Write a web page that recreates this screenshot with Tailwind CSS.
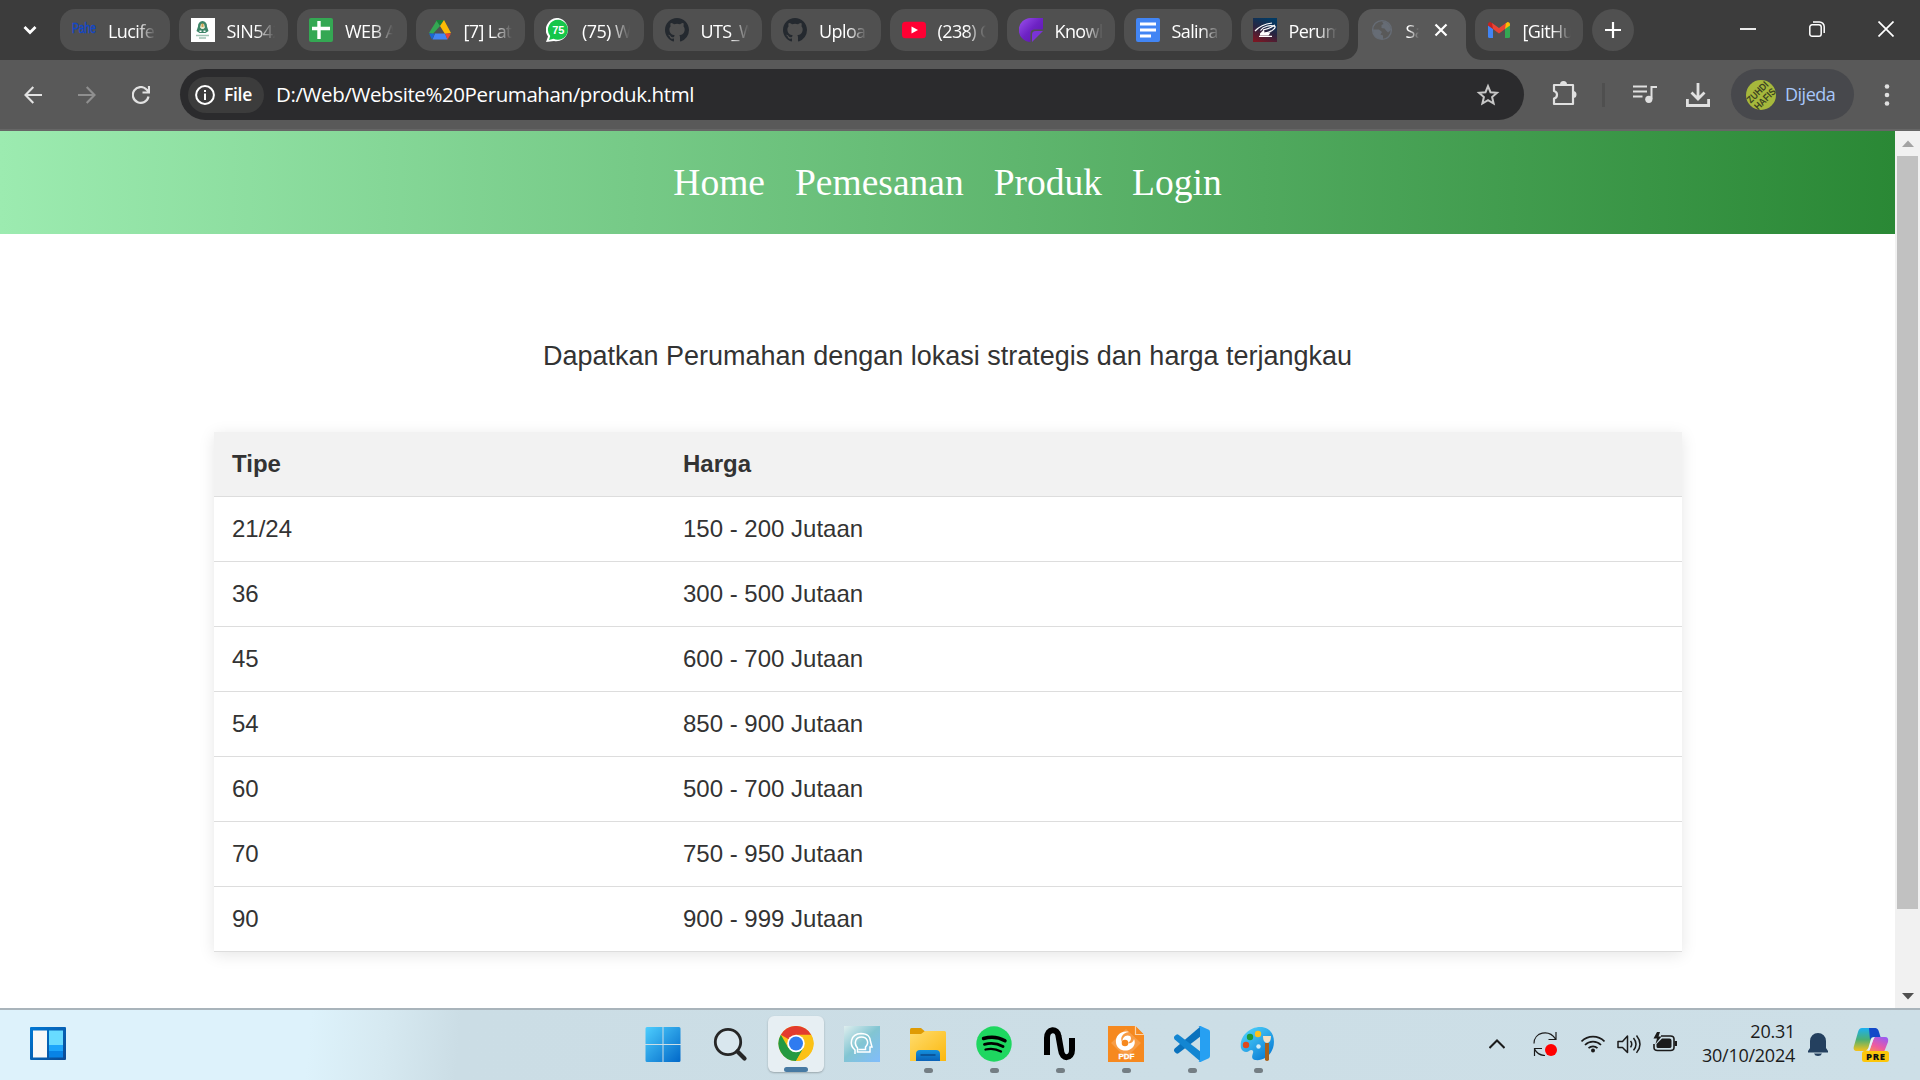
<!DOCTYPE html>
<html lang="id">
<head>
<meta charset="utf-8">
<title>Perumahan</title>
<script src="https://cdn.jsdelivr.net/npm/@tailwindcss/browser@4"></script>
</head>
<body class="w-[1920px] h-[1080px] overflow-hidden flex flex-col bg-white font-['Open_Sans',sans-serif]">

<!-- Tab strip -->
<div class="h-[60px] shrink-0 bg-[#3c3c3c] flex pt-[9px] pl-5 text-white text-[18px]">
  <div class="w-5 h-[42px] flex items-center justify-center mr-5">
    <svg class="size-5" viewBox="0 0 20 20" fill="none" stroke="#fff" stroke-width="2.8"><path d="M4.5 7l5.500 5.500L15.500 7"/></svg>
  </div>
  <div class="flex gap-[9px]">
    <div class="w-[109.5px] h-[42px] rounded-[15px] bg-[#505050] flex items-center pl-3 pr-3 gap-3">
      <svg class="size-6 shrink-0" viewBox="0 0 24 24"><text x="0" y="15" font-family="Liberation Sans" font-size="14" textLength="24" lengthAdjust="spacingAndGlyphs" fill="#1247c8" stroke="#1247c8" stroke-width=".4">Pahe</text></svg>
      <span class="w-12 overflow-hidden whitespace-nowrap tracking-[-0.6px] mask-r-from-60% mask-r-to-100% pt-0.5">Lucifer</span>
    </div>
    <div class="w-[109.5px] h-[42px] rounded-[15px] bg-[#505050] flex items-center pl-3 pr-3 gap-3">
      <svg class="size-6 shrink-0" viewBox="0 0 24 24"><path fill="#fff" d="M0 0h24v24H0z"/><path fill="#3d8568" d="M11.500 3a5 5 0 0 1 4.500 5.500l1.500 4.500-3 2h-6l-3-2L7 8.500A5 5 0 0 1 11.500 3z"/><path fill="#e5e9cf" d="M9 9.500l1-3.500h3l1 3.500-1.500 1.500h-2z"/><path fill="#d2a050" d="M10.500 5.500h2V9h-2z"/><path fill="#fff" d="M8.500 12.500h2v1.500h-2zM12.500 12.500h2v1.500h-2z"/><path stroke="#9fc4b4" stroke-width="1.600" d="M5 17.500h13M8 20h7"/></svg>
      <span class="w-12 overflow-hidden whitespace-nowrap tracking-[-0.6px] mask-r-from-60% mask-r-to-100% pt-0.5">SIN542</span>
    </div>
    <div class="w-[109.5px] h-[42px] rounded-[15px] bg-[#505050] flex items-center pl-3 pr-3 gap-3">
      <svg class="size-6 shrink-0" viewBox="0 0 24 24"><rect width="24" height="24" rx="2" fill="#34a853"/><path d="M3 10.500h18M10 3v18" stroke="#fff" stroke-width="3.400"/></svg>
      <span class="w-12 overflow-hidden whitespace-nowrap tracking-[-0.6px] mask-r-from-60% mask-r-to-100% pt-0.5">WEB A</span>
    </div>
    <div class="w-[109.5px] h-[42px] rounded-[15px] bg-[#505050] flex items-center pl-3 pr-3 gap-3">
      <svg class="size-6 shrink-0" viewBox="0 0 24 24"><path fill="#34a853" d="M9 2l3.500 5.500L4.800 16 1 15z"/><path fill="#188038" d="M8 2h8l-4 6z"/><path fill="#fbbc04" d="M16 2l7 13-6 1-5-8z"/><path fill="#4285f4" d="M7 15.500h10l2.500 6H4.500z"/><path fill="#1967d2" d="M1 15.500h6l-3 6z"/><path fill="#ea4335" d="M17 15.500h6l-3.500 6z"/></svg>
      <span class="w-12 overflow-hidden whitespace-nowrap tracking-[-0.6px] mask-r-from-60% mask-r-to-100% pt-0.5">[7] Lati</span>
    </div>
    <div class="w-[109.5px] h-[42px] rounded-[15px] bg-[#505050] flex items-center pl-3 pr-3 gap-3">
      <svg class="size-6 shrink-0" viewBox="0 0 24 24"><path fill="#fff" d="M12.500 0A11.700 11.700 0 1 1 8 23L0 24l2-5.500A11.800 11.800 0 0 1 12.500 0z"/><path fill="#16c64a" d="M12.300 1.800a10 10 0 1 1-4.800 19L3 22l1.200-4A10 10 0 0 1 12.300 1.800z"/><text x="12.300" y="16" text-anchor="middle" font-size="11" font-weight="700" font-family="Liberation Sans" fill="#fff">75</text></svg>
      <span class="w-12 overflow-hidden whitespace-nowrap tracking-[-0.6px] mask-r-from-60% mask-r-to-100% pt-0.5">(75) W</span>
    </div>
    <div class="w-[109.5px] h-[42px] rounded-[15px] bg-[#505050] flex items-center pl-3 pr-3 gap-3">
      <svg class="size-6 shrink-0" viewBox="0 0 16 16" fill="#24292f"><path d="M8 0C3.580 0 0 3.580 0 8c0 3.540 2.290 6.530 5.470 7.590.4.070.55-.17.55-.38 0-.19-.01-.82-.01-1.490-2.010.37-2.530-.49-2.690-.94-.09-.23-.48-.94-.82-1.130-.28-.15-.68-.52-.01-.53.63-.01 1.080.58 1.230.82.72 1.210 1.870.87 2.330.66.07-.52.28-.87.51-1.070-1.780-.2-3.640-.89-3.640-3.950 0-.87.31-1.590.82-2.150-.08-.2-.36-1.020.08-2.120 0 0 .67-.21 2.200.82a7.600 7.600 0 0 1 4 0c1.530-1.040 2.200-.82 2.200-.82.44 1.100.16 1.920.08 2.120.51.56.82 1.270.82 2.150 0 3.070-1.870 3.750-3.650 3.950.29.25.54.73.54 1.480 0 1.070-.01 1.930-.01 2.200 0 .21.15.46.55.38A8 8 0 0 0 16 8c0-4.420-3.580-8-8-8z"/></svg>
      <span class="w-12 overflow-hidden whitespace-nowrap tracking-[-0.6px] mask-r-from-60% mask-r-to-100% pt-0.5">UTS_W</span>
    </div>
    <div class="w-[109.5px] h-[42px] rounded-[15px] bg-[#505050] flex items-center pl-3 pr-3 gap-3">
      <svg class="size-6 shrink-0" viewBox="0 0 16 16" fill="#24292f"><path d="M8 0C3.580 0 0 3.580 0 8c0 3.540 2.290 6.530 5.470 7.590.4.070.55-.17.55-.38 0-.19-.01-.82-.01-1.490-2.010.37-2.530-.49-2.690-.94-.09-.23-.48-.94-.82-1.130-.28-.15-.68-.52-.01-.53.63-.01 1.080.58 1.230.82.72 1.210 1.870.87 2.330.66.07-.52.28-.87.51-1.070-1.780-.2-3.640-.89-3.640-3.950 0-.87.31-1.590.82-2.150-.08-.2-.36-1.020.08-2.120 0 0 .67-.21 2.200.82a7.600 7.600 0 0 1 4 0c1.530-1.040 2.200-.82 2.200-.82.44 1.100.16 1.920.08 2.120.51.56.82 1.270.82 2.150 0 3.070-1.870 3.750-3.650 3.950.29.25.54.73.54 1.480 0 1.070-.01 1.930-.01 2.200 0 .21.15.46.55.38A8 8 0 0 0 16 8c0-4.420-3.580-8-8-8z"/></svg>
      <span class="w-12 overflow-hidden whitespace-nowrap tracking-[-0.6px] mask-r-from-60% mask-r-to-100% pt-0.5">Upload</span>
    </div>
    <div class="w-[108px] h-[42px] rounded-[15px] bg-[#505050] flex items-center pl-3 pr-3 gap-3">
      <svg class="size-6 shrink-0" viewBox="0 0 24 24"><rect y="3.800" width="24" height="16.500" rx="3.500" fill="#ff0033"/><path fill="#fff" d="M9.500 8.500l6.500 3.500-6.500 3.500z"/></svg>
      <span class="w-12 overflow-hidden whitespace-nowrap tracking-[-0.6px] mask-r-from-60% mask-r-to-100% pt-0.5">(238) C</span>
    </div>
    <div class="w-[108px] h-[42px] rounded-[15px] bg-[#505050] flex items-center pl-3 pr-3 gap-3">
      <svg class="size-6 shrink-0" viewBox="0 0 24 24"><defs><linearGradient id="kn" x2="1" y2="1"><stop stop-color="#9b51ee"/><stop offset=".5" stop-color="#6d22c4"/><stop offset="1" stop-color="#5a17a8"/></linearGradient></defs><path fill="url(#kn)" d="M24 0v11.500H15.500q-4 0-4 4V24A12 12 0 0 1 12 0z"/><path fill="#7a33d6" d="M24 13L13 24v-7.500q0-3.500 3.500-3.500z"/></svg>
      <span class="w-12 overflow-hidden whitespace-nowrap tracking-[-0.6px] mask-r-from-60% mask-r-to-100% pt-0.5">Knowle</span>
    </div>
    <div class="w-[108px] h-[42px] rounded-[15px] bg-[#505050] flex items-center pl-3 pr-3 gap-3">
      <svg class="size-6 shrink-0" viewBox="0 0 24 24"><rect width="24" height="24" rx="2" fill="#4285f4"/><path d="M4 6h16M4 12h16M4 18h11" stroke="#fff" stroke-width="3"/></svg>
      <span class="w-12 overflow-hidden whitespace-nowrap tracking-[-0.6px] mask-r-from-60% mask-r-to-100% pt-0.5">Salinan</span>
    </div>
    <div class="w-[108px] h-[42px] rounded-[15px] bg-[#505050] flex items-center pl-3 pr-3 gap-3">
      <svg class="size-6 shrink-0" viewBox="0 0 24 24"><defs><linearGradient id="pr" x1=".2" y1="1" x2=".6" y2="0"><stop stop-color="#7c1622"/><stop offset=".5" stop-color="#2a2440"/><stop offset="1" stop-color="#033a63"/></linearGradient></defs><path fill="url(#pr)" d="M0 0h24v24H0z"/><g fill="none" stroke="#fff" stroke-width="1.200"><path d="M2 13C6 8.500 11 6 19 5M7.500 12.500C10 8.500 17 6.500 22 8.500c1 1.500-4 6-10 6.500M10 12c4-1 8-2 12-5M6 18.300h13"/></g><path fill="#fff" d="M7 15.500l4-4 .5 3h6l-2 3H7z"/></svg>
      <span class="w-12 overflow-hidden whitespace-nowrap tracking-[-0.6px] mask-r-from-60% mask-r-to-100% pt-0.5">Perumahan</span>
    </div>
    <div class="relative w-[108px] h-[51px] rounded-t-[15px] bg-[#595959] flex items-start">
      <svg class="absolute -left-[15px] bottom-0 size-[15px]" viewBox="0 0 15 15"><path fill="#595959" d="M15 0v15H0A15 15 0 0 0 15 0z"/></svg>
      <svg class="absolute -right-[15px] bottom-0 size-[15px]" viewBox="0 0 15 15"><path fill="#595959" d="M0 0v15h15A15 15 0 0 1 0 0z"/></svg>
      <div class="h-[42px] flex items-center pl-3 gap-3">
        <svg class="size-6 shrink-0" viewBox="0 0 24 24"><circle cx="12" cy="12" r="9.400" fill="none" stroke="#666c75" stroke-width="1.400"/><path fill="#666c75" d="M3 11.500h6l3 2.500-1.500 2.500 2.500 1V21C7 21.500 3 18 3 11.500zM12 3.500c5-.5 9 4 9 8.500l-3 2.500-2-2-1.500-2-3-.5V7l2-1z"/></svg>
        <span class="w-[13px] overflow-hidden whitespace-nowrap tracking-[-0.6px] mask-r-from-20% mask-r-to-100% pt-0.5">Sa</span>
        <svg class="ml-[3px] size-3.5" viewBox="0 0 14 14" stroke="#fff" stroke-width="2.200"><path d="M1.500 1.500l11 11M12.500 1.500l-11 11"/></svg>
      </div>
    </div>
    <div class="w-[108px] h-[42px] rounded-[15px] bg-[#505050] flex items-center pl-3 pr-3 gap-3">
      <svg class="size-6 shrink-0" viewBox="0 0 24 24"><path fill="#4285f4" d="M1 7l5 3.700V20H2.500Q1 20 1 18.500z"/><path fill="#34a853" d="M23 7l-5 3.700V20h3.500q1.500 0 1.500-1.500z"/><path fill="#c5221f" d="M1 6.500Q1 4 3.500 4l2.500 2v5L1 7.500z"/><path fill="#fbbc04" d="M23 6.500Q23 4 20.500 4L18 6v5l5-3.500z"/><path fill="#ea4335" d="M5 5l7 5 7-5-1 6-6 4.500L6 11z"/></svg>
      <span class="w-12 overflow-hidden whitespace-nowrap tracking-[-0.6px] mask-r-from-60% mask-r-to-100% pt-0.5">[GitHub</span>
    </div>
    <div class="size-[42px] rounded-full bg-[#505050] flex items-center justify-center">
      <svg class="size-4" viewBox="0 0 16 16" stroke="#fff" stroke-width="2.200"><path d="M8 0v16M0 8h16"/></svg>
    </div>
  </div>
  <div class="ml-auto h-10 flex items-center gap-[53px] pr-[26px]">
    <svg class="size-4" viewBox="0 0 16 16"><path stroke="#fff" stroke-width="1.800" d="M0 8h16"/></svg>
    <svg class="size-4" viewBox="0 0 16 16" fill="none" stroke="#fff" stroke-width="1.500"><rect x=".8" y="3.800" width="11.400" height="11.400" rx="2.300"/><path d="M4 1h6.500A4.700 4.700 0 0 1 15.200 5.700V12"/></svg>
    <svg class="size-4" viewBox="0 0 16 16" stroke="#fff" stroke-width="1.700"><path d="M.5.5l15 15M15.500.5l-15 15"/></svg>
  </div>
</div>

<!-- Toolbar -->
<div class="h-[71px] shrink-0 bg-[#595959] border-b-2 border-[#666] flex items-start pt-[9px] pl-6">
  <div class="h-[51px] w-[156px] flex items-center gap-9">
    <svg class="size-[18px]" viewBox="0 0 18 18" fill="none" stroke="#e2e2e2" stroke-width="2.100"><path d="M18 9H1.800M9.300 1L1.500 9l7.800 8"/></svg>
    <svg class="size-[18px]" viewBox="0 0 18 18" fill="none" stroke="#8f8f8f" stroke-width="2.100"><path d="M0 9h16.200M8.700 1l7.800 8-7.800 8"/></svg>
    <svg class="size-[18px]" viewBox="0 0 18 18" fill="none" stroke="#e2e2e2" stroke-width="2.200"><path d="M16.500 10.500A7.900 7.900 0 1 1 14.500 3.500L17 6M17 0v6.500h-6.500"/></svg>
  </div>
  <div class="w-[1344px] h-[51px] rounded-full bg-[#2b2b2d] flex items-center pl-2 pr-6">
    <div class="w-[76px] h-9 rounded-full bg-[#3c3c3c] flex items-center pl-[7px] gap-[9px]">
      <svg class="size-5" viewBox="0 0 20 20" fill="none" stroke="#fff" stroke-width="2"><circle cx="10" cy="10" r="8.900"/><path d="M10 8.500V15M10 5v2"/></svg>
      <span class="text-white text-[17.5px] font-semibold tracking-[-0.3px]">File</span>
    </div>
    <span class="ml-3 text-white text-[20.5px] tracking-[-0.4px] whitespace-nowrap">D:/Web/Website%20Perumahan/produk.html</span>
    <svg class="ml-auto size-6" viewBox="0 0 24 24" fill="none" stroke="#c7c7c7" stroke-width="2"><path d="M12 3.200l2.500 6 6.500.6-4.900 4.300 1.500 6.400-5.600-3.400-5.600 3.400 1.500-6.400L3 9.800l6.500-.6z"/></svg>
  </div>
  <div class="h-[51px] flex-1 flex items-center">
    <svg class="ml-[27px] mb-1 size-[26px]" viewBox="0 0 26 26" fill="none" stroke="#e0e0e0" stroke-width="2.200" stroke-linejoin="round"><path d="M3 5h19v19H3v-5.500c4-1 4-6.500 0-7.500z"/><path fill="#e0e0e0" stroke="none" d="M9 4.500a3.400 3.400 0 0 1 7 0zM22 11a3.200 3.200 0 0 1 0 7z"/></svg>
    <div class="ml-[25px] w-[3px] h-6 bg-[#4f4f4f]"></div>
    <svg class="ml-7 size-6" viewBox="0 0 24 24" fill="none" stroke="#e0e0e0" stroke-width="2"><path d="M0 3.500h14M0 8.500h14M0 13.500h9.500M24 4h-5.500v12"/><circle cx="15.800" cy="16.300" r="3.600" fill="#e0e0e0" stroke="none"/></svg>
    <svg class="ml-[29px] size-6" viewBox="0 0 24 24" fill="none" stroke="#e0e0e0" stroke-width="2.800"><path d="M12 0v16M5.500 9.500L12 16l6.500-6.500M1.400 16v6.500h21.200V16"/></svg>
    <div class="ml-[21px] w-[123px] h-[51px] rounded-full bg-[#47484c] flex items-center pl-[15px] gap-[9px]">
      <svg class="size-[30px]" viewBox="0 0 30 30"><circle cx="15" cy="15" r="15" fill="#a6b83c"/><g transform="rotate(-45 15 15)" font-family="Liberation Sans" font-weight="700" font-size="10" fill="#3c4422"><text x="1.500" y="14" textLength="26" lengthAdjust="spacingAndGlyphs">ZUHDI</text><text x="2" y="24" textLength="26" lengthAdjust="spacingAndGlyphs">HAFIS</text></g></svg>
      <span class="text-[#a8c7fa] text-[18px] tracking-[-0.5px]">Dijeda</span>
    </div>
    <svg class="ml-[21px] size-6" viewBox="0 0 24 24" fill="#e0e0e0"><circle cx="12" cy="3.500" r="2.300"/><circle cx="12" cy="12" r="2.300"/><circle cx="12" cy="20.500" r="2.300"/></svg>
  </div>
</div>

<!-- Page viewport -->
<div class="h-[877px] shrink-0 flex">
  <main class="w-[1895px] flex flex-col items-center font-['Liberation_Sans',sans-serif] text-[#333]">
    <nav class="w-full h-[103px] flex justify-center items-center gap-[30px] bg-linear-to-r/srgb from-[#9cebb0] to-[#2a8835] text-white text-[37.5px] leading-[43px] font-['Liberation_Serif',serif]">
      <a>Home</a><a>Pemesanan</a><a>Produk</a><a>Login</a>
    </nav>
    <p class="mt-[107px] text-[27px] leading-[31px] whitespace-nowrap">Dapatkan Perumahan dengan lokasi strategis dan harga terjangkau</p>
    <table class="mt-[60px] ml-px w-[1468px] table-fixed border-separate border-spacing-0 text-[24px] leading-7 text-left shadow-[0_3px_15px_rgba(0,0,0,0.1)]">
      <colgroup><col class="w-[451px]"><col></colgroup>
      <thead><tr class="h-[65px] bg-[#f2f2f2]"><th class="border-b border-[#ddd] px-[18px]">Tipe</th><th class="border-b border-[#ddd] px-[18px]">Harga</th></tr></thead>
      <tbody class="[&_td]:border-b [&_td]:border-[#ddd] [&_td]:px-[18px] [&_tr]:h-[65px]">
        <tr><td>21/24</td><td>150 - 200 Jutaan</td></tr>
        <tr><td>36</td><td>300 - 500 Jutaan</td></tr>
        <tr><td>45</td><td>600 - 700 Jutaan</td></tr>
        <tr><td>54</td><td>850 - 900 Jutaan</td></tr>
        <tr><td>60</td><td>500 - 700 Jutaan</td></tr>
        <tr><td>70</td><td>750 - 950 Jutaan</td></tr>
        <tr><td>90</td><td>900 - 999 Jutaan</td></tr>
      </tbody>
    </table>
  </main>
  <div class="w-[25px] bg-[#f1f1f1] flex flex-col items-center">
    <svg class="h-[25px] w-3" viewBox="0 0 12 25"><path fill="#a3a3a3" d="M0 16l6-6.500 6 6.500z"/></svg>
    <div class="w-[21px] h-[753px] bg-[#c1c1c1]"></div>
    <svg class="mt-auto h-[25px] w-3" viewBox="0 0 12 25"><path fill="#505050" d="M0 10h12l-6 6.500z"/></svg>
  </div>
</div>

<!-- Taskbar -->
<div class="h-[72px] shrink-0 border-t-2 border-[#a9b4bb] bg-[linear-gradient(95deg,#ddf2fb_0px,#ddf2fb_310px,#d6e9f1_385px,#cbdde5_460px,#cddfe7_1920px)] flex items-start">
  <div class="w-[631px] pl-[30px] pt-[17px]">
    <svg class="w-9 h-[33px]" viewBox="0 0 36 33"><defs><linearGradient id="wb" x2="1" y2="1"><stop stop-color="#0078d4"/><stop offset="1" stop-color="#0b4a94"/></linearGradient></defs><rect width="36" height="33" rx="1" fill="url(#wb)"/><path fill="#f8f8f8" d="M3 3.500h14v27H3z"/><path fill="#68dbff" d="M19 3.500h14V18H19z"/><path fill="#1ca5fb" d="M19 18h14v6H19z"/><path fill="#0883e6" d="M19 24h14v6.500H19z"/></svg>
  </div>
  <div class="flex h-[70px]">
    <div class="w-[66px] flex justify-center pt-[16px] pr-[3px]">
      <svg class="size-9" viewBox="0 0 36 36"><defs><linearGradient id="wn" gradientUnits="userSpaceOnUse" x1="0" y1="0" x2="36" y2="36"><stop stop-color="#4fd0ff"/><stop offset="1" stop-color="#0067c8"/></linearGradient></defs><path fill="url(#wn)" d="M.5 2.500q0-1.500 1.500-1.500h15.500v17H.5zM18.500 1H34q1.500 0 1.500 1.500V18h-17zM.5 19h17v17H2q-1.500 0-1.500-1.500zM18.500 19h17v15.500q0 1.500-1.500 1.500H18.500z"/></svg>
    </div>
    <div class="w-[66px] flex justify-center pt-[16px] pl-0.5">
      <svg class="size-9" viewBox="0 0 36 36" fill="none" stroke="#262626"><circle cx="15" cy="16" r="12.700" fill="#d9e7ee" stroke-width="2.800"/><path stroke-width="4.200" stroke-linecap="round" d="M24.500 25.500l7 7"/></svg>
    </div>
    <div class="w-[66px] flex justify-center pt-1.5">
      <div class="w-14 h-14 rounded-md bg-[#e7eff3] shadow-[0_1px_2px_rgba(0,0,0,0.25)] flex flex-col items-center pt-2.5">
        <svg class="size-9" viewBox="0 0 36 36"><circle cx="18" cy="18" r="18" fill="#fbc116"/><path fill="#e33b2e" d="M18 18L2.400 9A18 18 0 0 1 33.600 9z"/><path fill="#e33b2e" d="M18 9h15.600L18 18z"/><path fill="#249a41" d="M2.400 9A18 18 0 0 0 18 36l7.800-13.500L18 18l-7.800 4.500z"/><path fill="#fbc116" d="M25.800 22.500L18 36A18 18 0 0 0 33.600 9H18z"/><circle cx="18" cy="18" r="9" fill="#fff"/><circle cx="18" cy="18" r="7.200" fill="#2f7bf0"/></svg>
        <div class="mt-1.5 w-6 h-[5px] shrink-0 rounded-full bg-[#477aa3]"></div>
      </div>
    </div>
    <div class="w-[66px] flex justify-center pt-4">
      <svg class="size-9" viewBox="0 0 36 36"><defs><linearGradient id="cg" x2=".9" y2="1"><stop stop-color="#dfeeee"/><stop offset=".5" stop-color="#82c5d2"/><stop offset="1" stop-color="#80bdf8"/></linearGradient></defs><path fill="url(#cg)" d="M0 0h36v36H0z"/><g fill="none" stroke="#fff" stroke-width="1.500"><path d="M11 28V24C5 19 6 8 17 7.500c7 0 9.500 4 9.500 8l1.500 5.500h-2v5H13.500V22c-4-5-2-11 4-11s8 6 4 10v2.500h-7"/></g></svg>
    </div>
    <div class="w-[66px] flex flex-col items-center pt-4">
      <svg class="size-9" viewBox="0 0 36 36"><defs><linearGradient id="fo" x2="1" y2="1"><stop stop-color="#ffdc6e"/><stop offset="1" stop-color="#fbb80e"/></linearGradient><linearGradient id="fb" x2="0" y2="1"><stop stop-color="#1491dd"/><stop offset="1" stop-color="#0a62b8"/></linearGradient></defs><path fill="#df9b04" d="M0 3.500Q0 2 1.500 2H11l4 3.500V12H0z"/><path fill="url(#fo)" d="M0 8h11l4-3h19.500Q36 5 36 6.500V35H0z"/><path fill="url(#fb)" d="M6 35v-7q0-4 4-4h16q4 0 4 4v7z"/><path stroke="#0b4d8f" stroke-width="1.600" d="M10.500 29h15"/></svg>
      <div class="mt-1.5 w-[9px] h-[5px] rounded-full bg-[#747e84]"></div>
    </div>
    <div class="w-[66px] flex flex-col items-center pt-4">
      <svg class="size-9" viewBox="0 0 36 36"><circle cx="18" cy="18" r="17.700" fill="#1ed760"/><g fill="none" stroke="#000" stroke-linecap="round"><path stroke-width="3.400" d="M7.500 12.500c7-2 15.500-1.200 21.500 2.300"/><path stroke-width="2.900" d="M8.500 18.300c6-1.600 13-.9 18.500 2.200"/><path stroke-width="2.300" d="M9.500 23.500c5-1.200 10.500-.8 15.500 2"/></g></svg>
      <div class="mt-1.5 w-[9px] h-[5px] rounded-full bg-[#747e84]"></div>
    </div>
    <div class="w-[66px] flex flex-col items-center pt-4">
      <svg class="size-9" viewBox="0 0 36 36" fill="none" stroke="#000" stroke-width="6"><path d="M5 29V12C5 2 15.500 2 16.500 10l2.500 14c1 10 11 9 11 0V12"/></svg>
      <div class="mt-1.5 w-[9px] h-[5px] rounded-full bg-[#747e84]"></div>
    </div>
    <div class="w-[66px] flex flex-col items-center pt-4">
      <svg class="size-9" viewBox="0 0 36 36"><path fill="#f6891f" d="M0 0h27l9 9v27H0z"/><path fill="#f9b06a" d="M18 3l15 14-15 15L3 17z" opacity=".5"/><path fill="#f6891f" stroke="#fbd3a8" stroke-width="1.200" d="M27.500 0v8.500H36"/><path fill="#fff" d="M21 6c-8-2-14 4-13 11 1 6 7 9 13 7 5-2 7-7 5-11-1 4-4 5-6 4 3-2 4-5 2-7-4-2-9 2-7 7-4-4-1-10 6-11z"/><circle cx="17" cy="17" r="3.300" fill="#f6891f"/><text x="18.500" y="33" text-anchor="middle" font-family="Liberation Sans" font-weight="700" font-size="8" fill="#fff" stroke="#fff" stroke-width=".3">PDF</text></svg>
      <div class="mt-1.5 w-[9px] h-[5px] rounded-full bg-[#747e84]"></div>
    </div>
    <div class="w-[66px] flex flex-col items-center pt-4">
      <svg class="size-9" viewBox="0 0 36 36"><path fill="#0a72bd" d="M.7 22.500Q-.8 24.500.7 26l1.500 1.300q1 .8 2.300 0L27 10V0z"/><path fill="#1386d2" d="M.7 13.500Q-.8 11.500.7 10l1.500-1.300q1-.8 2.300 0L27 26v10z"/><path fill="#27a0f2" d="M26.500 0l8.300 3.800Q36 4.400 36 6v24q0 1.600-1.200 2.200L26.500 36q-1.300.3-2-.7 1.500.3 1.500-1.300V2q0-1.600-1.500-1.300.7-1 2-.7z"/></svg>
      <div class="mt-1.5 w-[9px] h-[5px] rounded-full bg-[#747e84]"></div>
    </div>
    <div class="w-[66px] flex flex-col items-center pt-4">
      <svg class="size-9" viewBox="0 0 36 36"><defs><linearGradient id="pt" x2=".8" y2="1"><stop stop-color="#55dbff"/><stop offset="1" stop-color="#087ad4"/></linearGradient></defs><path fill="url(#pt)" d="M20 1C32 1 36 12 33 22c-3 9-11 13-18 12-4-1-3-4-2-7s-2-4-4-2-7 1-8-3C-1 11 9 1 20 1z"/><circle cx="18.500" cy="20.500" r="2.200" fill="#d4edf7"/><circle cx="6" cy="19" r="3.200" fill="#e04a1c"/><circle cx="10" cy="11" r="3.200" fill="#1d9a38"/><circle cx="18" cy="8" r="3.200" fill="#fcc21d"/><path fill="#a8611b" d="M25 17h4v17q-2 2-4 0z"/><path fill="#f3dfc2" d="M23 10h8q0 7-4 7t-4-7z"/></svg>
      <div class="mt-1.5 w-[9px] h-[5px] rounded-full bg-[#747e84]"></div>
    </div>
  </div>
  <div class="ml-auto mr-[18px] h-[70px] flex items-center text-[#1b1b1b]">
    <div class="w-[34px] flex justify-center"><svg class="w-4 h-6" viewBox="0 0 16 24" fill="none" stroke="#1b1b1b" stroke-width="2"><path d="M.5 15L8 7.500l7.500 7.500"/></svg></div>
    <div class="w-[61px] flex justify-center"><svg class="size-6 mb-0.5" viewBox="0 0 24 24" fill="none" stroke="#1b1b1b" stroke-width="1.200"><path d="M1 11.500C1 0 16-3 22.500 7M23 0v7.500h-7.500M12 23.500c-5 0-9-3-10-6M1.500 24v-7.500H9"/><circle cx="18" cy="18" r="6" fill="#f00" stroke="none"/></svg></div>
    <div class="w-9 flex justify-center"><svg class="size-6 mb-1" viewBox="0 0 24 24" fill="none" stroke="#1b1b1b" stroke-width="1.700"><path d="M.5 10.500a16 16 0 0 1 23 0M4 14a11.300 11.300 0 0 1 16 0M7.500 17.200a6.500 6.500 0 0 1 9 0"/><circle cx="12" cy="19.500" r="2" fill="#1b1b1b" stroke="none"/></svg></div>
    <div class="w-9 flex justify-center"><svg class="size-6 mb-0.5" viewBox="0 0 24 24" fill="none" stroke="#1b1b1b" stroke-width="1.500" stroke-linejoin="round"><path d="M1 9.500h4.500l5-5.500v16.500l-5-5H1zM13.500 9q2.500 3.200 0 6.400M16.500 6q5 6.200 0 12.400M19.500 3.500q7 8.700 0 17.400"/></svg></div>
    <div class="w-9 flex justify-center"><svg class="size-6 mb-1" viewBox="0 0 24 24"><path fill="none" stroke="#1b1b1b" stroke-width="1.600" d="M8 5h9.500Q21 5 21 8v8.500q0 3-3.500 3H4.500q-3.500 0-3.500-3V13"/><path fill="#1b1b1b" d="M9 7.500h7.500q2 0 2 2v6q0 1.500-2 1.500H5q-1.500 0-1.500-1.500V13zM21.500 10H24v5h-2.500zM4 1L.5 7.500H4L2.500 13 8.500 5.500H5.500L7 1z"/></svg></div>
    <div class="w-28 pb-1 text-right text-[18px] leading-6 tracking-[-0.25px] whitespace-nowrap"><div>20.31</div><div>30/10/2024</div></div>
    <div class="w-[45px] flex justify-center"><svg class="w-5 h-6" viewBox="0 0 20 24" fill="#24405f"><path d="M10 0a8 8 0 0 1 8 8v7l2 3v1.500H0V18l2-3V8a8 8 0 0 1 8-8zM6 20.500h8q-1 2.500-4 2.500t-4-2.500z"/></svg></div>
    <div class="w-[62px] flex justify-center"><svg class="w-9 h-9" viewBox="0 0 36 36"><defs><linearGradient id="c1" x2="0" y2="1"><stop stop-color="#1bb0f2"/><stop offset=".5" stop-color="#4bb074"/><stop offset="1" stop-color="#f6c21a"/></linearGradient><linearGradient id="c2" x1=".8" y1="0" x2=".2" y2="1"><stop stop-color="#9a5cf2"/><stop offset=".6" stop-color="#ee5aa0"/><stop offset="1" stop-color="#fb8a52"/></linearGradient></defs><path fill="url(#c1)" d="M9 1h14l-6 20q-1 3-4 3H4c-3 0-4-2-3-5L5 5q1-4 4-4z"/><path fill="#1249c8" d="M16 1h6q3 0 4 4l1.500 5H21q-3 0-4 3z"/><path fill="url(#c2)" d="M22 10h10q4 0 3 5l-4 10H14q2 0 3-3l3-9q1-3 2-3z"/><path fill="#e6f2f8" d="M19 10.500h3q-1 0-2 3l-3.500 10H13q2-1 2.500-3l2-7q.5-2 1.500-3z"/><rect x="9" y="24" width="27" height="11" rx="2.500" fill="#fcc60a"/><text x="22.500" y="33" text-anchor="middle" font-family="Open Sans" font-weight="800" font-size="9.500" textLength="19" fill="#111">PRE</text></svg></div>
  </div>
</div>
</body>
</html>
